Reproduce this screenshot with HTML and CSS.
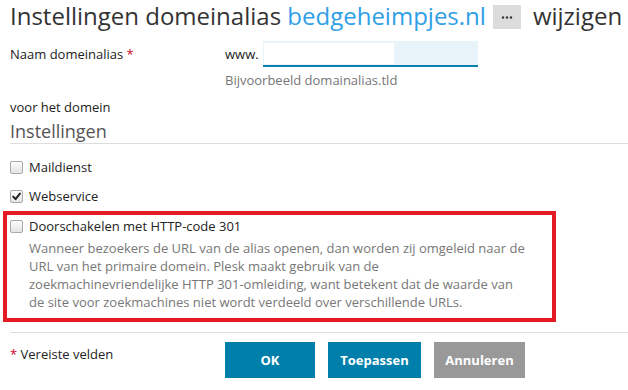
FILE: index.html
```html
<!DOCTYPE html>
<html lang="nl">
<head>
<meta charset="utf-8">
<title>Instellingen domeinalias</title>
<link rel="stylesheet" href="styles.css">
</head>
<body>
<h1 class="title">Instellingen domeinalias <span class="title-link">bedgeheimpjes.nl</span><span class="more-btn"><svg width="28" height="24" viewBox="0 0 28 24"><circle cx="10" cy="12.5" r="1.2" fill="#333"/><circle cx="14" cy="12.5" r="1.2" fill="#333"/><circle cx="18" cy="12.5" r="1.2" fill="#333"/></svg></span>wijzigen</h1>

<div class="form-row row-name">
  <div class="label">Naam domeinalias <span class="req">*</span></div>
  <div class="field">
    <div class="input-line">
      <span class="prefix">www.</span>
      <span class="input"><span class="input-fill"></span></span>
    </div>
    <div class="hint">Bijvoorbeeld domainalias.tld</div>
  </div>
</div>

<div class="form-row row-domain">
  <div class="label">voor het domein</div>
</div>

<h2 class="section">Instellingen</h2>

<div class="check-row row-mail"><span class="box"></span><span>Maildienst</span></div>
<div class="check-row row-web"><span class="box checked"><svg width="9" height="9" viewBox="0 0 9 9"><path d="M1.2 4.6 L3.6 7.1 L7.9 1.6" fill="none" stroke="#222" stroke-width="2" stroke-linecap="round" stroke-linejoin="round"/></svg></span><span>Webservice</span></div>

<div class="highlight">
  <div class="check-row row-redirect"><span class="box"></span><span>Doorschakelen met HTTP-code 301</span></div>
  <p class="desc">Wanneer bezoekers de URL van de alias openen, dan worden zij omgeleid naar de URL van het primaire domein. Plesk maakt gebruik van de zoekmachinevriendelijke HTTP 301-omleiding, want betekent dat de waarde van de site voor zoekmachines niet wordt verdeeld over verschillende URLs.</p>
</div>

<div class="footer">
  <div class="required"><span class="req">*</span> Vereiste velden</div>
  <div class="buttons">
    <span class="btn btn-primary btn-ok">OK</span>
    <span class="btn btn-primary btn-apply">Toepassen</span>
    <span class="btn btn-cancel">Annuleren</span>
  </div>
</div>
</body>
</html>
```

FILE: styles.css
```css
html, body {
  margin: 0;
  padding: 0;
  background: #fff;
}
body {
  font-family: "Open Sans", "Liberation Sans", sans-serif;
  font-size: 13px;
  line-height: 18px;
  color: #222;
  width: 628px;
  height: 390px;
  overflow: hidden;
}
.title {
  margin: 0;
  padding: 0 0 0 10px;
  font-size: 24px;
  font-weight: 400;
  line-height: 32px;
  color: #333;
  white-space: nowrap;
}
.title-link {
  color: #2fa0e6;
}
.more-btn {
  display: inline-block;
  vertical-align: top;
  margin: 5px 12px 0 7px;
  width: 28px;
  height: 24px;
  background: #dcdcdc;
}
.more-btn svg {
  display: block;
}
.form-row {
  display: grid;
  grid-template-columns: 225px 1fr;
}
.label {
  padding-left: 10px;
}
.row-name {
  margin-top: 9px;
}
.row-name .label {
  line-height: 26px;
}
.req {
  color: #d0021b;
}
.input-line {
  display: flex;
  align-items: center;
  gap: 4px;
}
.prefix {
  line-height: 26px;
}
.input {
  display: block;
  width: 215px;
  height: 26px;
  box-sizing: border-box;
  background: #e9f4fa;
  border-bottom: 2px solid #0a80b0;
  padding: 2px 0 0 1px;
}
.input-fill {
  display: block;
  width: 130px;
  height: 21px;
  background: #fff;
}
.hint {
  margin-top: 4px;
  color: #777;
}
.row-domain {
  margin-top: 9px;
}
.section {
  margin: 0 0 0 10px;
  padding-top: 4px;
  font-size: 18px;
  font-weight: 400;
  line-height: 23px;
  color: #555;
  border-bottom: 1px solid #ddd;
}
.check-row {
  display: flex;
  align-items: center;
  padding-left: 10px;
  color: #222;
}
.row-mail {
  margin-top: 14px;
}
.row-web {
  margin-top: 11px;
}
.box {
  width: 13px;
  height: 13px;
  box-sizing: border-box;
  border: 1px solid #a9a9a9;
  border-radius: 2px;
  background: linear-gradient(#fdfdfd, #e4e4e4);
  margin-right: 6px;
  display: flex;
  align-items: center;
  justify-content: center;
}
.highlight {
  margin: 6px 0 0 3px;
  width: 553px;
  box-sizing: border-box;
  border: 4px solid #e51b24;
  padding: 2px 0 7px 0;
}
.row-redirect {
  padding-left: 3px;
}
.desc {
  margin: 4px 0 0 22px;
  width: 500px;
  color: #777;
}
.footer {
  margin: 10px 0 0 10px;
  border-top: 1px solid #ddd;
  padding-top: 9px;
  display: grid;
  grid-template-columns: 215px 1fr;
}
.required {
  padding-top: 3px;
}
.buttons {
  display: flex;
  gap: 13px;
}
.btn {
  display: inline-block;
  height: 36px;
  line-height: 36px;
  width: 90px;
  box-sizing: border-box;
  text-align: center;
  font-weight: 700;
  color: #fff;
}
.btn-apply {
  width: 93px;
}
.btn-primary {
  background: #007fab;
}
.btn-cancel {
  background: #999;
  width: 91px;
}
```
